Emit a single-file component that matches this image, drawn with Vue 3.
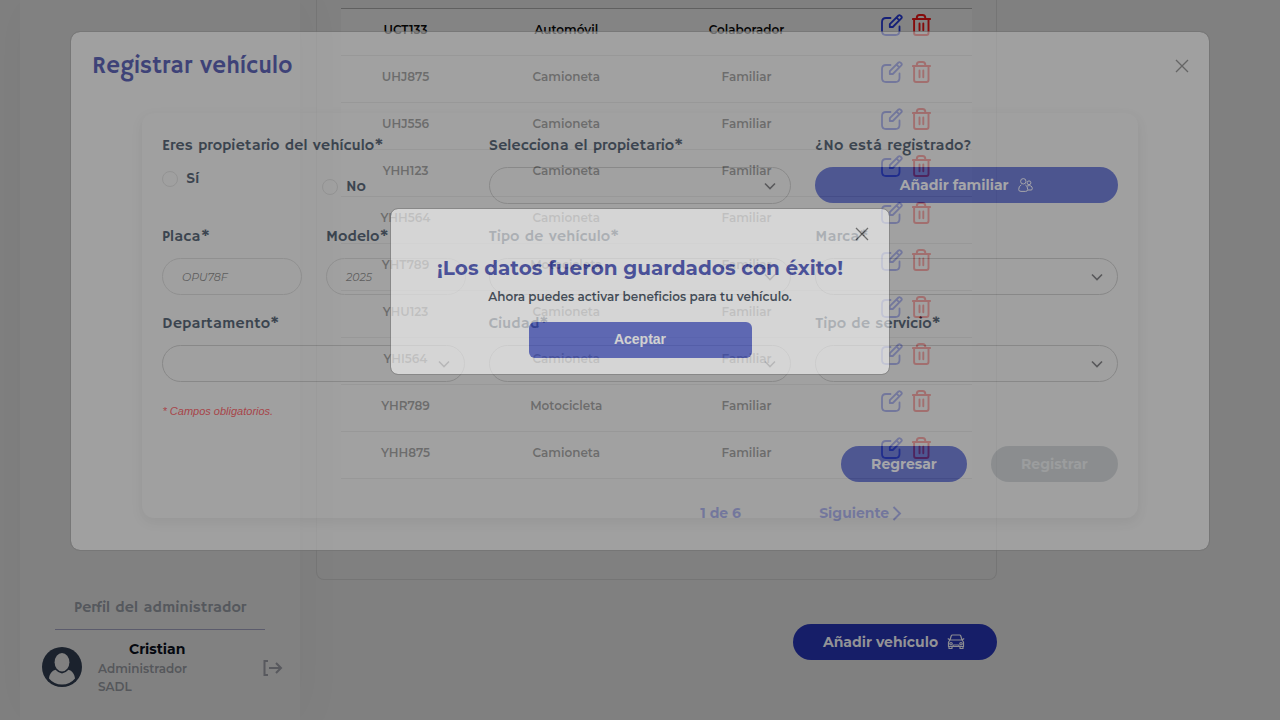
<script setup>
const rows = [
  ['UCT133', 'Automóvil', 'Colaborador'],
  ['UHJ875', 'Camioneta', 'Familiar'],
  ['UHJ556', 'Camioneta', 'Familiar'],
  ['YHH123', 'Camioneta', 'Familiar'],
  ['YHH564', 'Camioneta', 'Familiar'],
  ['YHT789', 'Motocicleta', 'Familiar'],
  ['YHU123', 'Camioneta', 'Familiar'],
  ['YHI564', 'Camioneta', 'Familiar'],
  ['YHR789', 'Motocicleta', 'Familiar'],
  ['YHH875', 'Camioneta', 'Familiar'],
]
</script>

<template>
  <div class="screen">
    <div class="page">
      <aside class="sidebar">
        <h3 class="profile-title">Perfil del administrador</h3>
        <div class="profile">
          <svg class="avatar" viewBox="0 0 40 40">
            <circle cx="20" cy="20" r="20" fill="#1b222d" />
            <ellipse cx="20" cy="15.3" rx="7.4" ry="9.2" fill="#808080" />
            <path d="M7 31.500C7.500 27 10 23.700 13.500 22.800Q20 30 26.500 22.800C30 23.700 32.500 27 33 31.500Q28 37.500 20 37.500Q12 37.500 7 31.500Z" fill="#808080" />
          </svg>
          <div class="who">
            <span class="name">Cristian</span>
            <span class="role">Administrador</span>
            <span class="role sadl">SADL</span>
          </div>
          <svg class="logout" viewBox="0 0 20 16" fill="none" stroke="#58595e" stroke-width="2">
            <path d="M5 1H1.500V15H5M6 8H18M13 3L18 8L13 13" />
          </svg>
        </div>
      </aside>
      <main class="main">
        <section class="card">
          <div class="table">
            <div v-for="row in rows" :key="row[0]" class="row">
              <span v-for="cell in row" :key="cell" class="cell">{{ cell }}</span>
              <span class="actions">
                <svg width="22" height="23" viewBox="0 0 22 23" fill="none" stroke="#152078" stroke-width="1.800" stroke-linecap="round" stroke-linejoin="round">
                  <path d="M9.500 4H5Q1 4 1 8V17Q1 21 5 21H14.500Q18.500 21 18.500 17V12.500M8.800 13V10.200L17.500 1.500Q18.500 .700 19.500 1.600L20.500 2.500Q21.200 3.500 20.300 4.400L11.800 13ZM15.500 3.600L18.400 6.400" />
                </svg>
                <svg width="20" height="23" viewBox="0 0 20 23" fill="none" stroke="#850b0b" stroke-width="1.9" stroke-linecap="round" stroke-linejoin="round">
                  <path d="M.900 5H18.100M4.800 5V4Q4.800 1 7.500 1H10.500Q13.300 1 13.300 4V5M2.100 5V19Q2.100 21 4.100 21H14.500Q16.500 21 16.500 19V5M7.500 9.500V16.300M11.300 9.500V16.300" />
                </svg>
              </span>
            </div>
          </div>
          <div class="pager">
            <span class="count">1 de 6</span>
            <span class="next">Siguiente</span>
            <svg width="10" height="15" viewBox="0 0 10 15" fill="none" stroke="#152078" stroke-width="1.900"><path d="M1.500 1L8 7.500L1.500 14" /></svg>
          </div>
        </section>
        <button class="btn add-car">
          <span>Añadir vehículo</span>
          <svg width="18" height="16" viewBox="0 0 18 16" fill="none" stroke="#8c8c91" stroke-width="1.2" stroke-linejoin="round">
            <path d="M3 6L4.200 2Q4.500 1 5.500 1H12.500Q13.500 1 13.800 2L15 6M3 6H15L16.500 8V12.500H1.500V8ZM3 6L.800 4.500M15 6L17.200 4.500M2 12.500V14.500H5V12.500M13 12.500V14.500H16V12.500M5.500 12.500L6.500 11H11.500L12.500 12.500" />
            <circle cx="4" cy="9.700" r="1.200" /><circle cx="14" cy="9.700" r="1.200" />
          </svg>
        </button>
      </main>
    </div>

    <div class="modal">
      <header class="modal-head">
        <h1>Registrar vehículo</h1>
        <svg class="close" viewBox="0 0 14 14"><path d="M1 1L13 13M13 1L1 13" /></svg>
      </header>
      <form class="form">
        <div class="field">
          <label>Eres propietario del vehículo*</label>
          <div class="radios">
            <span class="option"><i class="dot"></i><b>Sí</b></span>
            <span class="option low"><i class="dot"></i><b>No</b></span>
          </div>
        </div>
        <div class="field">
          <label>Selecciona el propietario*</label>
          <div class="select"><svg viewBox="0 0 12 8"><path d="M1 1.500L6 6.500L11 1.500" /></svg></div>
        </div>
        <div class="field">
          <label>¿No está registrado?</label>
          <button type="button" class="btn family">
            <span>Añadir familiar</span>
            <svg width="15" height="14" viewBox="0 0 15 14" fill="none" stroke="#c0c0c8" stroke-width="1">
              <circle cx="5.300" cy="3.300" r="2.700" /><circle cx="11" cy="4.800" r="1.900" />
              <path d="M3.300 6.900Q.700 8 .700 11.500Q.700 13.400 3 13.400H7.500Q9.700 13.400 9.700 11.500Q9.700 8 7.300 6.900M9 8Q14.300 6.500 14.300 10.800Q14.300 12 13 12H10" />
            </svg>
          </button>
        </div>
        <div class="field pair">
          <div><label>Placa*</label><div class="input">OPU78F</div></div>
          <div><label>Modelo*</label><div class="input">2025</div></div>
        </div>
        <div class="field">
          <label>Tipo de vehículo*</label>
          <div class="select"><svg viewBox="0 0 12 8"><path d="M1 1.500L6 6.500L11 1.500" /></svg></div>
        </div>
        <div class="field">
          <label>Marca*</label>
          <div class="select"><svg viewBox="0 0 12 8"><path d="M1 1.500L6 6.500L11 1.500" /></svg></div>
        </div>
        <div v-for="name in ['Departamento*', 'Ciudad*', 'Tipo de servicio*']" :key="name" class="field">
          <label>{{ name }}</label>
          <div class="select"><svg viewBox="0 0 12 8"><path d="M1 1.500L6 6.500L11 1.500" /></svg></div>
        </div>
        <p class="note">* Campos obligatorios.</p>
        <div class="form-actions">
          <button type="button" class="btn back">Regresar</button>
          <button type="button" class="btn save">Registrar</button>
        </div>
      </form>
    </div>

    <div class="popup">
      <svg class="close" viewBox="0 0 14 14"><path d="M1 1L13 13M13 1L1 13" /></svg>
      <h2>¡Los datos fueron guardados con éxito!</h2>
      <p>Ahora puedes activar beneficios para tu vehículo.</p>
      <button>Aceptar</button>
    </div>
  </div>
</template>

<style>
body { margin: 0; background: #808080; }
</style>

<style scoped>
* { box-sizing: border-box; }
.screen { position: relative; width: 1280px; height: 720px; overflow: hidden; background: #808080; font-family: Montserrat, Inter, sans-serif; font-weight: 600; white-space: nowrap; }
h1, h2, h3, p { margin: 0; }
button { border: 0; padding: 0; font-family: inherit; }
.page { display: flex; height: 720px; }
.sidebar { width: 280px; margin-left: 20px; flex: none; display: flex; flex-direction: column; padding-top: 597px; background: #818181; box-shadow: 0 0 48px rgba(0, 0, 0, .045); }
.profile-title { align-self: flex-start; width: 210px; margin-left: 35px; height: 33px; border-bottom: 1px solid #5b5b6c; text-align: center; font: 400 16px/23px "Hammersmith One", Lato, sans-serif; color: #55585d; }
.profile { display: flex; padding: 10px 0 0 22px; }
.avatar { width: 40px; height: 40px; margin-top: 7px; }
.who { display: flex; flex-direction: column; width: 165px; margin-left: 16px; }
.name { margin-left: 31px; font-size: 14px; font-weight: 700; line-height: 18px; color: #05080f; }
.role { font-size: 12px; line-height: 18px; margin-top: 2px; color: #55575b; }
.sadl { margin-top: 0; }
.logout { width: 20px; height: 16px; margin-top: 20px; }
.main { width: 697px; display: flex; flex-direction: column; padding-left: 16px; }
.card { width: 681px; height: 580px; padding: 8px 24px 0; border: 1px solid #757575; border-top: 0; border-radius: 0 0 8px 8px; }
.table { width: 631px; border-top: 1px solid #606060; background: #848484; }
.row { display: grid; grid-template-columns: 129px 192.500px 168px 141.500px; height: 47px; align-items: center; border-bottom: 1px solid #6e6e6e; }
.cell { text-align: center; font-size: 12px; line-height: 18px; padding-bottom: 4px; color: #050505; }
.actions { display: flex; gap: 9px; padding: 0 0 13px 50.500px; }
.pager { display: flex; align-items: center; height: 20px; margin-top: 24px; padding-left: 359.200px; color: #152078; font-size: 14px; font-weight: 700; }
.count { width: 119px; }
.next { width: 73px; }
.btn { display: flex; align-items: center; justify-content: center; height: 36px; border-radius: 18px; font-size: 14px; font-weight: 700; }
.add-car { align-self: flex-end; width: 204px; margin-top: 44px; gap: 9px; padding-right: 2px; background: #161e68; color: #929296; }
.modal { position: absolute; left: 70px; top: 31px; width: 1140px; height: 520px; border: 1px solid #707070; border-radius: 10px; background: #b7b7b7; background-clip: padding-box; opacity: .58; }
.modal-head { display: flex; justify-content: space-between; padding: 16px 20px 0 21px; height: 81px; }
h1 { font: 400 24px/36px "Hammersmith One", Lato, sans-serif; color: #0e1672; }
.close { width: 14px; height: 14px; fill: none; stroke: #525252; stroke-width: 1.300; }
.modal-head .close { margin-top: 11px; }
.form { width: 996px; height: 405px; margin-left: 71px; padding: 23px 20px 0; display: grid; grid-template-columns: repeat(3, minmax(0, 1fr)); grid-template-rows: 91px 87px 87px 45px 36px; column-gap: 24px; border-radius: 12px; background: #b7b7b7; box-shadow: 0 4px 12px rgba(0, 0, 0, .09); }
label, .option b { display: block; font: 400 16px/21px "Hammersmith One", Lato, sans-serif; color: #0a192d; }
label { height: 18px; }
.option b { padding-top: 1px; }
.radios { display: flex; }
.option { display: flex; align-items: center; flex: none; width: 160px; height: 20px; gap: 8px; margin-top: 15px; }
.low { margin-top: 23px; }
.dot { width: 16px; height: 16px; border: 1px solid #a0a0a0; border-radius: 50%; }
.select, .input { display: flex; align-items: center; height: 37px; margin-top: 13px; border: 1px solid #8e8e8e; border-radius: 19px; }
.select { justify-content: flex-end; padding-right: 14px; }
.select svg { width: 12px; height: 8px; fill: none; stroke: #3c3c40; stroke-width: 1.600; }
.pair { display: flex; gap: 24px; }
.pair > div { flex: none; width: 140px; }
.input { padding-left: 19px; border-color: #9c9c9c; font-size: 11px; font-style: italic; font-weight: 400; color: #444; }
.family { width: 100%; margin-top: 13px; gap: 9px; padding-right: 1px; background: #28379b; color: #c0c0c4; }
.note { grid-column: 1 / -1; font: italic 11px/20px "Liberation Sans", sans-serif; padding-left: .500px; color: #c31420; }
.form-actions { grid-column: 1 / -1; display: flex; justify-content: flex-end; gap: 24px; }
.back { width: 126px; background: #28379b; color: #c0c0c4; }
.save { width: 127px; background: #94989b; color: #b0b2b4; }
.popup { position: absolute; left: 390px; top: 208px; width: 500px; height: 167px; border: 1px solid #777; border-radius: 8px; background: #fcfcfc; background-clip: padding-box; opacity: .58; display: flex; flex-direction: column; align-items: center; }
.popup .close { align-self: flex-end; margin: 18px 20px 0 0; flex: none; stroke: #4a4a4a; }
h2 { margin-top: 14px; font-size: 20px; line-height: 26px; font-weight: 700; color: #0c1894; }
.popup p { margin-top: 7px; font-size: 12px; line-height: 18px; color: #000f25; }
.popup button { width: 223px; height: 36px; margin-top: 16px; padding-bottom: 2px; border-radius: 6px; background: #2e40bf; color: #f5f5f5; font: 700 14px "Liberation Sans", sans-serif; }
</style>
